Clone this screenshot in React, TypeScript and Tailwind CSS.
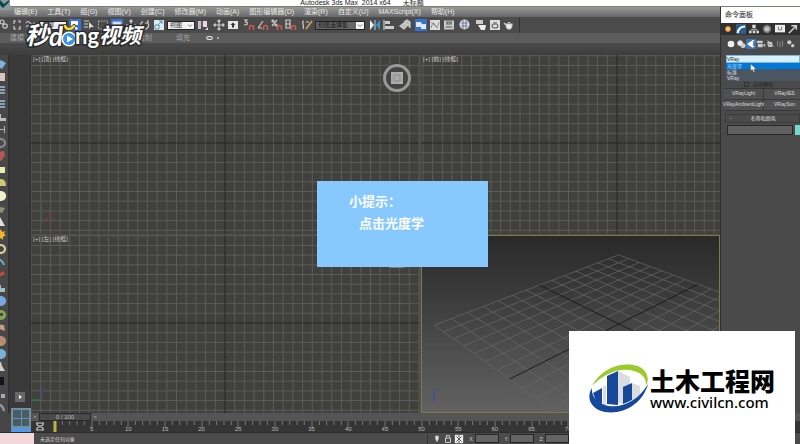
import type { ReactNode } from "react";
import clsx from "clsx";

const MENUS = [
  "编辑(E)", "工具(T)", "组(G)", "视图(V)", "创建(C)", "修改器(M)", "动画(A)",
  "图形编辑器(D)", "渲染(R)", "自定义(U)", "MAXScript(X)", "帮助(H)",
];

const PITCH = 9.7;

function Icon({ children, className }: { children: ReactNode; className?: string }) {
  return (
    <svg viewBox="0 0 12 12" className={clsx("block size-3 shrink-0", className)} fill="none" stroke="#cfcfcf" strokeWidth="1.2">
      {children}
    </svg>
  );
}

function Tool({ label, active, children }: { label: string; active?: boolean; children: ReactNode }) {
  return (
    <button aria-label={label} className={clsx("shrink-0", active && "bg-[#3b6fd0]")}>
      <Icon>{children}</Icon>
    </button>
  );
}

function Group({ children }: { children: ReactNode }) {
  return <div className="flex shrink-0 items-center gap-[2px]">{children}</div>;
}

function ToolSelect({ label, value, className }: { label: string; value: string; className: string }) {
  return (
    <div className={clsx("relative h-[9px] shrink-0 border border-[#222]", className)}>
      <select aria-label={label} className="block h-full w-full appearance-none pl-[2px] text-[6px] leading-[6px] outline-none">
        <option>{value}</option>
      </select>
      <svg viewBox="0 0 8 6" className="pointer-events-none absolute top-0 right-0 h-[7px] w-2 bg-[#f4f4f4]" fill="none" stroke="#777">
        <path d="M2 2l2 2 2-2" />
      </svg>
    </div>
  );
}

const magnet = <path d="M6.500 11V8.500a2 2 0 0 1 4 0V11" stroke="#d05a55" strokeWidth="1.500" />;

function Toolbar() {
  return (
    <div className="flex h-4 shrink-0 items-center gap-1 overflow-hidden bg-[#4b4b4b]">
      <div className="-mr-[2px] -ml-[3px]">
        <Tool label="链接"><circle cx="5" cy="4" r="2" /><circle cx="8" cy="8" r="2.200" /></Tool>
      </div>
      <Group>
        <Tool label="断开"><path d="M5 2H3v3M7 2h2v2M3 7v3h2M9 7v3H7" /></Tool>
        <Tool label="绑定"><path d="M1 4q2-3 4 0t5 0M1 8q2-3 4 0t5 0" /></Tool>
        <ToolSelect label="选择过滤器" value="全部" className="w-7 bg-[#eee] text-[#333]" />
        <Tool label="选择对象" active><path d="M2 2h7v4H6l3 4-2 1-3-4-2 2z" fill="#fff" stroke="none" /></Tool>
        <Tool label="按名称选择"><path d="M1 2h5M1 5h4M1 8h4" /><path d="M6 3l5 5H8l-2 2z" fill="#ddd" stroke="none" /></Tool>
        <Tool label="选择区域"><rect x="1.500" y="2" width="9" height="8" strokeDasharray="1.500 1" strokeWidth="0.800" /></Tool>
        <Tool label="窗口/交叉" active><rect x="2" y="3" width="8" height="6" fill="#e8e8e8" stroke="#aac8ef" /></Tool>
        <Tool label="移动"><path d="M6 1v10M1 6h10M4.500 2.500L6 1l1.500 1.500M4.500 9.500L6 11l1.500-1.500" /></Tool>
        <Tool label="旋转"><path d="M4 2.500a4 4 0 1 0 5 1.500M9 1v3H6" /></Tool>
        <Tool label="缩放"><rect x="1" y="1" width="10" height="10" fill="#dceaf3" stroke="none" /><path d="M2 10V6h4v4zM5 6l4-4M6 2h3v3" stroke="#397b9f" strokeWidth="0.800" /></Tool>
        <ToolSelect label="参考坐标系" value="视图" className="w-7 bg-[#eee] text-[#333]" />
        <Tool label="轴点中心"><rect x="1" y="2" width="3" height="8" fill="#b7c6cc" stroke="none" /><rect x="6" y="2" width="4" height="6" fill="#ddd" stroke="none" /><path d="M5 2v5" stroke="#c64e4e" /><path d="M11 8v3H8z" fill="#ddd" stroke="none" /></Tool>
      </Group>
      <Group>
        <Tool label="操纵"><path d="M6 1v10M1 6h10M4.500 2.500L6 1l1.500 1.500M4.500 9.500L6 11l1.500-1.500M2.500 4.500L1 6l1.500 1.500M9.500 4.500L11 6 9.500 7.500" /></Tool>
        <Tool label="键盘快捷键"><rect x="1" y="2" width="10" height="8" fill="#e7e7e7" stroke="none" /><path d="M6 3.500L8.500 6H7v2.500H5V6H3.500z" fill="#333" stroke="none" /></Tool>
      </Group>
      <Group>
        <Tool label="3D 捕捉"><path d="M1 1h3L2.500 3q2.500 0 1.500 2.500L1 6" />{magnet}</Tool>
        <Tool label="角度捕捉"><path d="M1 9L6 2M1 9h4" />{magnet}</Tool>
        <Tool label="百分比捕捉"><path d="M1 7L6 1" /><circle cx="2" cy="2" r="1" /><circle cx="5" cy="6" r="1" />{magnet}</Tool>
        <Tool label="微调器捕捉"><path d="M1 1h4v8H1zM1 5h4" />{magnet}</Tool>
      </Group>
      <Group>
        <Tool label="编辑选择集"><path d="M3 2Q1 2 2 5t0 5M5 3h3" /><path d="M5 10l6-8" stroke="#d5a35b" strokeWidth="1.600" /></Tool>
        <ToolSelect label="命名选择集" value="创建选择集" className="w-[50px] bg-[#666] text-[#111]" />
      </Group>
      <Group>
        <Tool label="镜像"><path d="M1 1l4 5-4 5z" fill="#eee" stroke="none" /><path d="M11 1L7 6l4 5z" fill="#3f93c8" stroke="none" /><path d="M6 1v10" stroke="#8ec2df" /></Tool>
        <Tool label="对齐"><path d="M1 1v10" /><rect x="2" y="2" width="5" height="3" fill="#ccc" stroke="none" /><rect x="2" y="7" width="9" height="3" fill="#ccc" stroke="none" /></Tool>
      </Group>
      <Group>
        <Tool label="层管理器"><path d="M1 7l4-3 4 2-4 4zM5 3l3-2 3 2v6" fill="#bbb" /></Tool>
      </Group>
      <Group>
        <Tool label="石墨工具" active><path d="M1 3h5l1 2h4v5H6V8H1z" fill="#dce9fa" stroke="none" /></Tool>
        <Tool label="曲线编辑器"><rect x="1" y="1" width="10" height="10" fill="#ddd" stroke="none" /><path d="M2 9q2-8 4-3t4-3M2 3l7 6" stroke="#777" strokeWidth="0.800" /></Tool>
        <Tool label="图解视图"><rect x="1" y="1.500" width="10" height="9" fill="#ccc" stroke="none" /><path d="M4 3h4v2H4zM2.500 8h7" stroke="#555" /></Tool>
      </Group>
      <Group>
        <Tool label="材质编辑器"><circle cx="5.500" cy="5.500" r="5" fill="#d7dfe4" stroke="none" /><path d="M2 4h7M2 7h7M4 1v9M7 1v9" stroke="#68798a" strokeWidth="0.900" /></Tool>
      </Group>
      <Group>
        <Tool label="渲染设置"><rect x="1" y="1" width="7" height="4" fill="#ccc" stroke="none" /><path d="M3 6h8l-1 5H6z" fill="#eee" stroke="none" /></Tool>
        <Tool label="渲染帧窗口"><rect x="1" y="1" width="10" height="10" fill="#ddd" stroke="none" /><ellipse cx="6" cy="7" rx="3" ry="2" stroke="#666" /><path d="M4 4h4" stroke="#666" /></Tool>
        <Tool label="渲染产品"><path d="M3 5h6q0 4-2 5H5Q3 9 3 5zM1 4l2 2M5 3.500h2" fill="#eee" /></Tool>
      </Group>
      <div className="h-4 border-r border-[#333]" />
    </div>
  );
}

function Cmd({ label, active, children }: { label: string; active?: boolean; children: ReactNode }) {
  return (
    <button aria-label={label} className={clsx("shrink-0", active && "bg-[#3e75b8]")}>
      <Icon className="!size-[10px]">{children}</Icon>
    </button>
  );
}

function CommandPanel() {
  return (
    <aside className="w-20 shrink-0 overflow-hidden border-l border-[#303030] bg-[#4a4a4a] text-[#dedede]">
      <h2 className="h-4 bg-white pl-1 text-[7px] leading-4 text-[#222]">命令面板</h2>
      <div className="flex h-3 items-center gap-[3px] bg-[#303030] pl-[2px]">
        <Cmd label="创建"><circle cx="6" cy="6" r="3" fill="#ffc46c" stroke="#d8863a" /></Cmd>
        <Cmd label="修改"><rect width="12" height="12" fill="#2f5d92" stroke="none" /><path d="M2 11Q3 3 11 3" stroke="#fff" strokeWidth="2.500" /></Cmd>
        <Cmd label="层次"><path d="M4 1h4v4H4zM0 8h3v3H0zM4.500 8h3v3h-3zM9 8h3v3H9z" fill="#ddd" stroke="none" /><path d="M2 7h8" /></Cmd>
        <Cmd label="运动"><circle cx="6" cy="6" r="4" fill="#c0c0c0" stroke="#777" strokeWidth="2" /></Cmd>
        <Cmd label="显示"><rect y="1" width="12" height="9" fill="#eee" stroke="none" /><path d="M4 3v4h4V3" stroke="#777" /></Cmd>
        <Cmd label="实用程序"><path d="M1 11l8-8M4 2h6v5" strokeWidth="1.800" /></Cmd>
      </div>
      <div className="flex h-[18px] items-center pl-[5px]">
        <Cmd label="几何体"><circle cx="6" cy="6" r="4" fill="#eee" stroke="none" /></Cmd>
        <Cmd label="图形"><circle cx="5" cy="5" r="3" fill="#eee" /><circle cx="8.500" cy="8" r="2.500" fill="#ccc" /></Cmd>
        <Cmd label="灯光" active><path d="M2 6l6-4v8zM8 2h2M8 9h2" fill="#fff" stroke="#fff" /></Cmd>
        <Cmd label="摄影机"><path d="M1 2h7v3H1zM2 6h6v4H2zM8 7l3-1v4z" fill="#ccc" stroke="none" /></Cmd>
        <Cmd label="辅助对象"><path d="M2 2l7 7M2 4h5v5H3z" fill="#aaa" stroke="#ccc" /></Cmd>
        <Cmd label="空间扭曲"><path d="M2 2v7M5 3v7M8 2v7" stroke="#888" /></Cmd>
        <Cmd label="系统"><circle cx="4" cy="4" r="2.500" fill="#ccc" stroke="none" /><circle cx="8" cy="8" r="2" fill="#ccc" stroke="none" /></Cmd>
      </div>
      <div className="relative mt-[2px] ml-[5px]">
        <select aria-label="灯光类型" className="block h-2 w-full appearance-none border border-[#7cb6dc] bg-[#d9effc] text-[5px] leading-[6px] text-[#222]">
          <option>VRay</option>
        </select>
        <ul className="absolute top-2 left-0 z-10 w-full bg-[#4b5663] pl-px text-[5px] leading-[6px]">
          <li className="-ml-px bg-[#0078d7] pl-px text-[#bde0ff]">光度学</li>
          <li>标准</li>
          <li>VRay</li>
        </ul>
        <svg viewBox="0 0 8 12" className="absolute top-[9px] left-6 z-20 h-[9px] w-[6px]">
          <path d="M1 0v9l2-2 2 4 1-1-1-3h3z" fill="#fff" stroke="#555" strokeWidth="0.500" />
        </svg>
      </div>
      <label className="mt-[18px] flex h-[6px] items-center justify-center gap-1 pr-1 text-[5px] leading-[6px] text-[#222]">
        <input type="checkbox" className="size-[5px] appearance-none border border-[#333]" />自动栅格
      </label>
      <div className="mt-px ml-[3px] grid grid-cols-[40px_42px] border-t border-[#383838] text-[5px]">
        {["VRayLight", "VRayIES", "VRayAmbientLight", "VRaySun"].map((name) => (
          <button key={name} className="flex h-[11px] items-center justify-center border-r border-b border-[#383838] bg-[#505050] whitespace-nowrap">
            {name}
          </button>
        ))}
      </div>
      <div className="mt-[3px] ml-1 flex h-[9px] items-center border border-[#3c3c3c] text-[5px]">
        <span className="pl-1">-</span>
        <span className="flex-1 pr-1 text-center">名称和颜色</span>
      </div>
      <div className="mt-[2px] flex gap-[2px] pl-[6px]">
        <input aria-label="名称" className="h-[10px] w-[66px] border border-[#292929] bg-[#606060]" />
        <button aria-label="颜色" className="h-[10px] flex-1 bg-[#75d8ca]" />
      </div>
    </aside>
  );
}

function Viewport({ name, cx, cy, children }: { name: string; cx: number; cy: number; children?: ReactNode }) {
  const lines = Array.from({ length: 81 }, (_, i) => i - 40).filter((i) => i !== 0);
  return (
    <section className="relative min-h-0 overflow-hidden bg-[#40403d]">
      <svg className="absolute inset-0 h-full w-full" stroke="#5b5b58" strokeWidth="1">
        {lines.map((i) => (
          <g key={i}>
            <line x1={cx + i * PITCH} x2={cx + i * PITCH} y1="0" y2="100%" />
            <line y1={cy + i * PITCH} y2={cy + i * PITCH} x1="0" x2="100%" />
          </g>
        ))}
        <line x1={cx} x2={cx} y1="0" y2="100%" stroke="#262624" />
        <line x1="0" x2="100%" y1={cy} y2={cy} stroke="#262624" />
        {children}
      </svg>
      <h3 className="relative pl-[2px] text-[6px] leading-[9px] text-[#c9c9c9]">[+] [{name}] [线框]</h3>
    </section>
  );
}

// u runs to the right vanishing point, v to the left one, both in -1..1
function project(u: number, v: number) {
  const w = 1 + 0.162 * u + 0.158 * v;
  const x = (197 + 0.162 * u * 763 - 0.158 * v * 386) / w;
  const y = (88 - 0.162 * u * 197 - 0.158 * v * 197) / w;
  return [x, y];
}

function PerspectiveView() {
  const steps = Array.from({ length: 15 }, (_, i) => (i - 7) / 7);
  const segment = (u1: number, v1: number, u2: number, v2: number) => {
    const [x1, y1] = project(u1, v1);
    const [x2, y2] = project(u2, v2);
    return { x1, y1, x2, y2 };
  };
  return (
    <section aria-label="透视" className="relative min-h-0 overflow-hidden border border-[#7d7b49] bg-linear-to-b from-[#292929] to-[#626262]">
      <svg className="absolute inset-0 h-full w-full" stroke="#686868" strokeWidth="0.7">
        {steps.filter((s) => s !== 0).map((s) => (
          <g key={s}>
            <line {...segment(-1, s, 1, s)} />
            <line {...segment(s, -1, s, 1)} />
          </g>
        ))}
        <line {...segment(-1, 0, 1, 0)} stroke="#1c1c1c" strokeWidth="1" />
        <line {...segment(0, -1, 0, 1)} stroke="#1c1c1c" strokeWidth="1" />
        <path d="M12 166v-13" stroke="#3f4fa0" strokeWidth="1.500" />
        <path d="M13 166l7-4" stroke="#80524b" />
      </svg>
    </section>
  );
}

const SIDE = [
  { c: "#7fb3dc", d: "M0 7l5-5 5 3-4 6z" },
  { c: "#d8c6c6", d: "M0 2h9v8H0z" },
  { c: "#89a3b6", d: "M0 2h9v2H0zM0 5h9v2H0zM0 8h9v2H0z" },
  { c: "#89a3b6", d: "M0 2h9v2H0zM0 5h9v2H0zM0 8h9v2H0z" },
  { c: "#bcbcbc", d: "M0 7h10v3H0zM2 3h3v4H2z" },
  { c: "#b0b0b0", d: "M0 5h8v1H0zM8 2h1v7H8z" },
  { c: "#8b8b8b", d: "M5 1a5 5 0 1 0 .1 0zM5 3a3 3 0 1 1-.1 0z" },
  { c: "#b45b51", d: "M1 2l7-1 1 5-4 5-5-3z" },
  { c: "#ecebb0", d: "M0 3h9v6H0z" },
  { c: "#cbc878", d: "M0 9q0-7 5-7t5 7z" },
  { c: "#f0efd0", d: "M5 1a5 5 0 1 0 .1 0z" },
  { c: "#92907a", d: "M0 3l9 2-3 5-6-2z" },
  { c: "#dedede", d: "M4 1l5 9H0z" },
  { c: "#f2b52a", d: "M5 0l1 3 3-1-1 3 2 1-3 2v3L5 9l-3 2V8L0 6l2-1z" },
  { c: "#d8cf9a", d: "M5 1a5 5 0 1 0 .1 0zM5 3a3 3 0 1 1-.1 0z" },
  { c: "#70a8cc", d: "M0 2q7 0 9 7H7Q5 4 0 4zM0 6q3 0 4 4H0z" },
  { c: "#c8493d", d: "M0 7l7-5 2 3-8 4z" },
  { c: "#a5bac8", d: "M1 3h4v3h4v4H0z" },
  { c: "#77a9df", d: "M5 1a5 5 0 1 0 .1 0z" },
  { c: "#84a84b", d: "M5 1a5 5 0 1 0 .1 0zM4 4h3v3H4z" },
  { c: "#c69b84", d: "M1 2l7 1 1 6-6-2z" },
  { c: "#b88b74", d: "M5 1a5 5 0 1 0 .1 0z" },
  { c: "#78b0d8", d: "M5 1a5 5 0 1 0 .1 0z" },
  { c: "#d2cec2", d: "M1 2l4-1 1 4 3 5H0z" },
  { c: "#10151c", d: "M0 2h8v8H0z" },
  { c: "#a5a8b3", d: "M1 2h2v8H1zM5 6h4v4H5z" },
  { c: "#9b9fa8", d: "M0 2q8 0 9 8H7Q6 4 0 4z" },
];

function SideBar() {
  return (
    <div className="flex w-2 shrink-0 flex-col justify-between overflow-hidden bg-[#484848] pt-[3px]">
      {SIDE.map((item, i) => (
        <button key={i} aria-label={`工具 ${i + 1}`} className="-ml-[6px] w-3">
          <Icon><path d={item.d} fill={item.c} stroke="none" fillRule="evenodd" transform="translate(2 0)" /></Icon>
        </button>
      ))}
    </div>
  );
}

function Timeline() {
  const marks = Array.from({ length: 20 }, (_, i) => i * 5);
  return (
    <div className="text-[6px] text-[#bdbdbd]">
      <div className="flex h-2 items-center bg-[#555]">
        <button className="w-2 leading-2">&lt;</button>
        <button className="h-2 w-[52px] border border-[#292929] bg-[#4a4a4a] text-center leading-[6px]">0 / 100</button>
        <button className="w-2 leading-2">&gt;</button>
      </div>
      <div className="flex h-[11px] bg-[#353535] pr-3">
        <button aria-label="迷你曲线" className="w-6 shrink-0 pl-[3px]">
          <Icon><path d="M2 2h8M2 9h8M3 2v2l6 3v2M9 2v2L3 7v2" /></Icon>
        </button>
        {marks.map((n) => (
          <div key={n} className="relative min-w-0 flex-1">
            <svg className="block h-[5px] w-full overflow-visible" stroke="#777">
              {[0, 1, 2, 3, 4].map((k) => (
                <line key={k} x1={`${k * 20}%`} x2={`${k * 20}%`} y1="0" y2={k ? 4 : 6} />
              ))}
            </svg>
            {n > 0 && <span className="absolute bottom-0 left-0 -translate-x-1/2 leading-[6px]">{n}</span>}
            {n === 0 && <span className="absolute inset-y-0 left-0 w-[3px] -translate-x-1/2 bg-[#c2b13e]" />}
          </div>
        ))}
      </div>
    </div>
  );
}

function StatusBar() {
  return (
    <footer className="flex h-3 shrink-0 items-center border-t border-[#2d2d2d] bg-[#4b4b4b] text-[5px] leading-[10px] text-[#d4d4d4]">
      <div className="h-full w-[34px] bg-[#f3d8da]" />
      <div className="ml-1 w-[390px] border-r border-[#333] pl-[2px]">未选定任何对象</div>
      <div className="flex items-center">
        <Icon className="!size-[10px] ml-1"><path d="M4 2h4v4l-2 4-2-4z" fill="#ddd" stroke="none" /></Icon>
        <Icon className="!size-[10px] ml-px"><path d="M3 5h6v5H3zM4 5V2h4v3" /></Icon>
        <Icon className="!size-[10px] ml-px"><rect x="1" y="1" width="10" height="10" fill="#eee" stroke="none" /><path d="M3 3l6 6M9 3L3 9M6 1v3M6 8v3" stroke="#555" /></Icon>
        {["X", "Y", "Z"].map((axis) => (
          <label key={axis} className="flex w-[35px] items-center justify-end gap-px">
            {axis}:
            <input className="h-[9px] w-6 border border-[#262626] bg-[#646464]" />
          </label>
        ))}
      </div>
    </footer>
  );
}

function VideoLogo() {
  return (
    <div className="absolute top-[22px] left-[25px] flex items-center font-bold text-white [paint-order:stroke_fill] [-webkit-text-stroke:3px_#2b2b2b]">
      <span className="text-[24px] leading-7 italic">秒</span>
      <span className="font-[Lato] text-[26px] leading-7 italic">d</span>
      <svg viewBox="0 0 14 24" className="-mx-px h-6 w-[14px] overflow-visible">
        <circle cx="7" cy="15" r="7.500" fill="#fff" />
        <circle cx="7" cy="15" r="6" fill="#3994e8" />
        <path d="M5 11.500l6 3.500-6 3.500z" fill="#fff" />
        <path d="M3 2q1 3 4 3 3 0 5-3" fill="none" stroke="#2b2b2b" strokeWidth="4" strokeLinecap="round" />
        <path d="M3 2q1 3 4 3 3 0 5-3" fill="none" stroke="#ffd332" strokeWidth="2.500" strokeLinecap="round" />
      </svg>
      <span className="font-[Lato] text-[22px] leading-7">ng</span>
      <span className="text-[21px] leading-7 italic">视频</span>
    </div>
  );
}

function Watermark() {
  return (
    <div className="absolute right-[5px] bottom-0 flex h-[113px] w-[226px] items-center bg-white pl-5 text-black">
      <svg viewBox="0 0 60 50" className="h-[50px] w-[60px] shrink-0">
        <path d="M29 8l12 6v26H29zM43 20l8 3v14l-8 3z" fill="#d9dce0" />
        <path d="M14 24l3-2v21h-3z" fill="#d9dce0" />
        <path d="M4 30l9-5v16l-6-3zM18 13l11-5v34l-11-1zM34 24l9-4v17l-9 4z" fill="#174799" />
        <path d="M3 23C12 5 33-2 49 3c9 4 12 13 8 19 0-7-4-12-12-14C31 4 16 10 3 23z" fill="#9aca2e" />
        <path d="M3 25c-6 9-2 21 13 24 19 3 38-9 43-28-9 16-25 24-39 22C9 41 2 34 3 25z" fill="#174799" />
      </svg>
      <div className="pt-2 pl-px">
        <div className="text-[25px] leading-5 font-black whitespace-nowrap">土木工程网</div>
        <div className="font-['Noto_Sans'] text-[15px] leading-5 font-medium">www.civilcn.com</div>
      </div>
    </div>
  );
}

export default function App() {
  return (
    <div className="relative flex h-screen flex-col overflow-hidden bg-[#444] font-['Liberation_Sans','Noto_Sans_CJK_SC',sans-serif]">
      <header className="flex h-[7px] shrink-0 items-end justify-center overflow-hidden border-b border-[#76806c] bg-white pr-[76px]">
        <h1 className="flex gap-3 text-[7px] leading-[6px] text-[#222]">
          <span>Autodesk 3ds Max&nbsp; 2014 x64</span>
          <span>无标题</span>
        </h1>
      </header>
      <div className="flex min-h-0 flex-1">
        <div className="flex min-w-0 flex-1 flex-col">
          <nav className="flex h-[10px] shrink-0 items-center gap-[10px] bg-linear-to-b from-[#989898] to-[#676767] pl-[14px] text-[7px] leading-[10px] whitespace-nowrap text-[#e8e8e8]">
            {MENUS.map((m) => (
              <button key={m}>{m}</button>
            ))}
          </nav>
          <Toolbar />
          <div className="flex h-[10px] shrink-0 items-center bg-[#5c5c5c] text-[7px] leading-[10px] text-[#a3a3a3]">
            <button className="ml-[10px] w-[128px] text-left">建模</button>
            <button className="w-[38px] text-left">绘制</button>
            <button>填充</button>
            <button aria-label="最小化" className="ml-4 flex items-center gap-1">
              <span className="block h-1 w-[7px] rounded-xs border border-[#ddd] bg-[#777]" />
              <span className="block size-[2px] bg-[#aaa]" />
            </button>
          </div>
          <div className="h-3 shrink-0 bg-linear-to-b from-[#4b4b4b] to-[#3d3d3d]" />
          <div className="flex min-h-0 flex-1">
            <SideBar />
            <div className="flex w-[23px] shrink-0 flex-col items-center justify-end border-x border-[#303030] bg-[#393939] pb-[11px]">
              <button aria-label="播放" className="size-[10px] bg-[#686868]">
                <svg viewBox="0 0 10 10"><path d="M4 3l3 2-3 2z" fill="#fff" /></svg>
              </button>
            </div>
            <div className="grid min-h-0 min-w-0 flex-1 grid-cols-[388fr_299fr] grid-rows-2 gap-x-[2px] gap-y-px bg-[#50504a]">
              <Viewport name="顶" cx={194} cy={88}>
                <circle cx="366" cy="23" r="12.500" fill="#444" stroke="#999" strokeWidth="3" />
                <path d="M360 17h12v12h-12z" fill="#aaa" stroke="none" />
                <path d="M363 20h6v6h-6z" stroke="#8a8a8a" fill="none" />
                <path d="M11 165v-14" stroke="#2e6354" />
                <path d="M13 165l6-4 5 4z" stroke="#71443a" fill="none" />
              </Viewport>
              <Viewport name="前" cx={196} cy={88} />
              <Viewport name="左" cx={194} cy={88}>
                <path d="M11 165v-14" stroke="#45438c" />
                <path d="M0 165h11" stroke="#2b8241" />
                <ellipse cx="366" cy="28" rx="15" ry="4" fill="none" stroke="#888" strokeWidth="2" />
              </Viewport>
              <PerspectiveView />
            </div>
          </div>
        </div>
        <CommandPanel />
      </div>
      <div className="flex shrink-0 bg-[#454545]">
        <div className="relative w-[31px] shrink-0">
          <button aria-label="视口布局" className="absolute right-0 bottom-0 grid h-6 w-5 grid-cols-2 gap-px border-b-4 border-[#5299e4] bg-[#7290a2] p-[2px]">
            {[0, 1, 2, 3].map((i) => <span key={i} className="bg-[#465c68]" />)}
          </button>
        </div>
        <div className="min-w-0 flex-1"><Timeline /></div>
      </div>
      <StatusBar />

      <svg viewBox="0 0 10 10" className="absolute top-0 left-0 size-[10px] bg-[#8b9a9d]">
        <path d="M0 0l4 4 5-4v2L3 8 0 5z" fill="#16444d" />
      </svg>
      <VideoLogo />
      <div role="status" className="absolute top-[181px] left-[317px] h-[86px] w-[171px] bg-[#86c8ff] pt-[10px] pl-8 text-[13px] leading-[22px] font-bold text-white">
        <p>小提示：</p>
        <p className="pl-[10px]">点击光度学</p>
      </div>
      <Watermark />
    </div>
  );
}
